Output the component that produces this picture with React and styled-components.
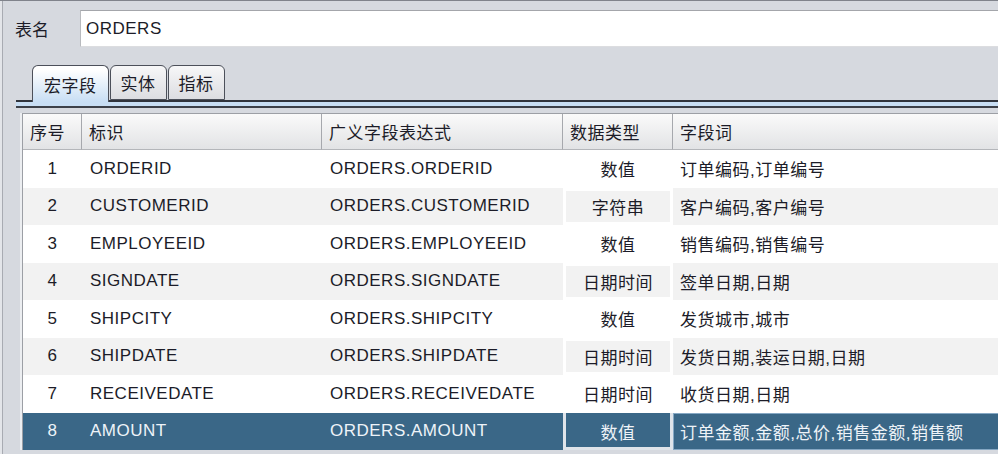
import React from "react";
import styled, { createGlobalStyle, css } from "styled-components";

const rows = [
  { id: 1, name: "ORDERID", expr: "ORDERS.ORDERID", type: "数值", words: "订单编码,订单编号" },
  { id: 2, name: "CUSTOMERID", expr: "ORDERS.CUSTOMERID", type: "字符串", words: "客户编码,客户编号" },
  { id: 3, name: "EMPLOYEEID", expr: "ORDERS.EMPLOYEEID", type: "数值", words: "销售编码,销售编号" },
  { id: 4, name: "SIGNDATE", expr: "ORDERS.SIGNDATE", type: "日期时间", words: "签单日期,日期" },
  { id: 5, name: "SHIPCITY", expr: "ORDERS.SHIPCITY", type: "数值", words: "发货城市,城市" },
  { id: 6, name: "SHIPDATE", expr: "ORDERS.SHIPDATE", type: "日期时间", words: "发货日期,装运日期,日期" },
  { id: 7, name: "RECEIVEDATE", expr: "ORDERS.RECEIVEDATE", type: "日期时间", words: "收货日期,日期" },
  { id: 8, name: "AMOUNT", expr: "ORDERS.AMOUNT", type: "数值", words: "订单金额,金额,总价,销售金额,销售额" },
];

const SELECTED = 8;

const GlobalStyle = createGlobalStyle`
  html, body {
    margin: 0;
    padding: 0;
    background: #d6d9df;
    overflow: hidden;
  }
  body {
    font-family: "Liberation Sans", "Noto Sans CJK SC", sans-serif;
    font-size: 17px;
    color: #1c1c28;
  }
`;

const Window = styled.div`
  height: 454px;
  border-top: 1px solid #80838b;
  box-shadow: inset 2px 0 #e3e5e9, inset 3px 0 #a8abb2;
  box-sizing: border-box;
  overflow: hidden;
`;

const NameRow = styled.div`
  display: flex;
  align-items: center;
  padding: 9px 0 0 15px;
`;

const Label = styled.span`
  width: 65px;
  flex-shrink: 0;
`;

const NameField = styled.div`
  flex: 1;
  height: 37px;
  box-sizing: border-box;
  background: #fff;
  border-top: 1px solid #a4a6ab;
  border-left: 1px solid #b8babe;
  border-bottom: 1px solid #dcdde0;
  display: flex;
  align-items: center;
  padding-left: 5px;
  letter-spacing: 0.5px;
`;

const TabArea = styled.div`
  padding-left: 16px;
  margin-top: 18px;
`;

const TabStrip = styled.div`
  display: flex;
  gap: 1px;
  padding-left: 16px;
  align-items: flex-end;
  height: 35px;
  position: relative;
  z-index: 1;
`;

const Tab = styled.div`
  height: 35px;
  box-sizing: border-box;
  padding: 0 10px 0 10px;
  display: flex;
  align-items: center;
  border: 1px solid #4c505a;
  border-radius: 6px 6px 0 0;
  background: linear-gradient(#f7f7f8, #dcdde1);
  letter-spacing: 0.5px;
  ${(p) =>
    p.$active &&
    css`
      height: 37px;
      padding: 0 11px 0 11px;
      margin-bottom: -2px;
      border-bottom: none;
      background: linear-gradient(#ffffff 10%, #c8def4);
    `}
`;

const TabRule = styled.div`
  height: 4px;
  border-top: 2px solid #30343c;
  border-bottom: 2px solid #3c4048;
  background: #c8def4;
`;

const TablePane = styled.div`
  margin: 5px 0 0 20px;
  border-left: 2px solid #eceef1;
`;

const Grid = styled.div`
  display: grid;
  grid-template-columns: 59px 240px 241px 110px 1fr;
  border-left: 1px solid #9c9fa5;
  border-top: 1px solid #9c9fa5;
  width: 1200px;
  letter-spacing: 0.5px;
`;

const HeadCell = styled.div`
  height: 36px;
  box-sizing: border-box;
  display: flex;
  align-items: center;
  padding: 0 7px;
  background: linear-gradient(#fafafa, #e2e3e5);
  border-right: 1px solid #a6a8ad;
  border-bottom: 1px solid #b4b6ba;
`;

const Cell = styled.div`
  height: 37.5px;
  box-sizing: border-box;
  display: flex;
  align-items: center;
  justify-content: ${(p) => (p.$center ? "center" : "flex-start")};
  padding: 0 8px;
  background: ${(p) => (p.$selected ? "#3a6787" : p.$alt ? "#f2f2f2" : "#ffffff")};
  color: ${(p) => (p.$selected ? "#eef3f8" : "#1c1c28")};
  white-space: nowrap;
`;

const TypeCell = styled(Cell)`
  box-shadow: inset 3px 0 0 ${(p) => (p.$selected ? "#dfe4ea" : "#fff")},
    inset -3px 0 0 ${(p) => (p.$selected ? "#dfe4ea" : "#fff")},
    inset 0 3px 0 ${(p) => (p.$selected ? "#3a6787" : "#fff")},
    inset 0 -3px 0 ${(p) => (p.$selected ? "#dfe4ea" : "#fff")};
`;

const WordsCell = styled(Cell)`
  padding-left: 7px;
  ${(p) =>
    p.$selected &&
    css`
      border: 1px solid #86a8c4;
      padding-left: 6px;
    `}
`;

export default function App() {
  return (
    <>
      <GlobalStyle />
      <Window>
        <NameRow>
          <Label>表名</Label>
          <NameField>ORDERS</NameField>
        </NameRow>
        <TabArea>
          <TabStrip>
            <Tab $active>宏字段</Tab>
            <Tab>实体</Tab>
            <Tab>指标</Tab>
          </TabStrip>
          <TabRule />
        </TabArea>
        <TablePane>
          <Grid>
            <HeadCell>序号</HeadCell>
            <HeadCell>标识</HeadCell>
            <HeadCell>广义字段表达式</HeadCell>
            <HeadCell>数据类型</HeadCell>
            <HeadCell>字段词</HeadCell>
            {rows.map((r) => {
              const sel = r.id === SELECTED;
              const alt = r.id % 2 === 0;
              return (
                <React.Fragment key={r.id}>
                  <Cell $center $selected={sel} $alt={alt}>{r.id}</Cell>
                  <Cell $selected={sel} $alt={alt}>{r.name}</Cell>
                  <Cell $selected={sel} $alt={alt}>{r.expr}</Cell>
                  <TypeCell $center $selected={sel} $alt={alt}>{r.type}</TypeCell>
                  <WordsCell $selected={sel} $alt={alt}>{r.words}</WordsCell>
                </React.Fragment>
              );
            })}
          </Grid>
        </TablePane>
      </Window>
    </>
  );
}
